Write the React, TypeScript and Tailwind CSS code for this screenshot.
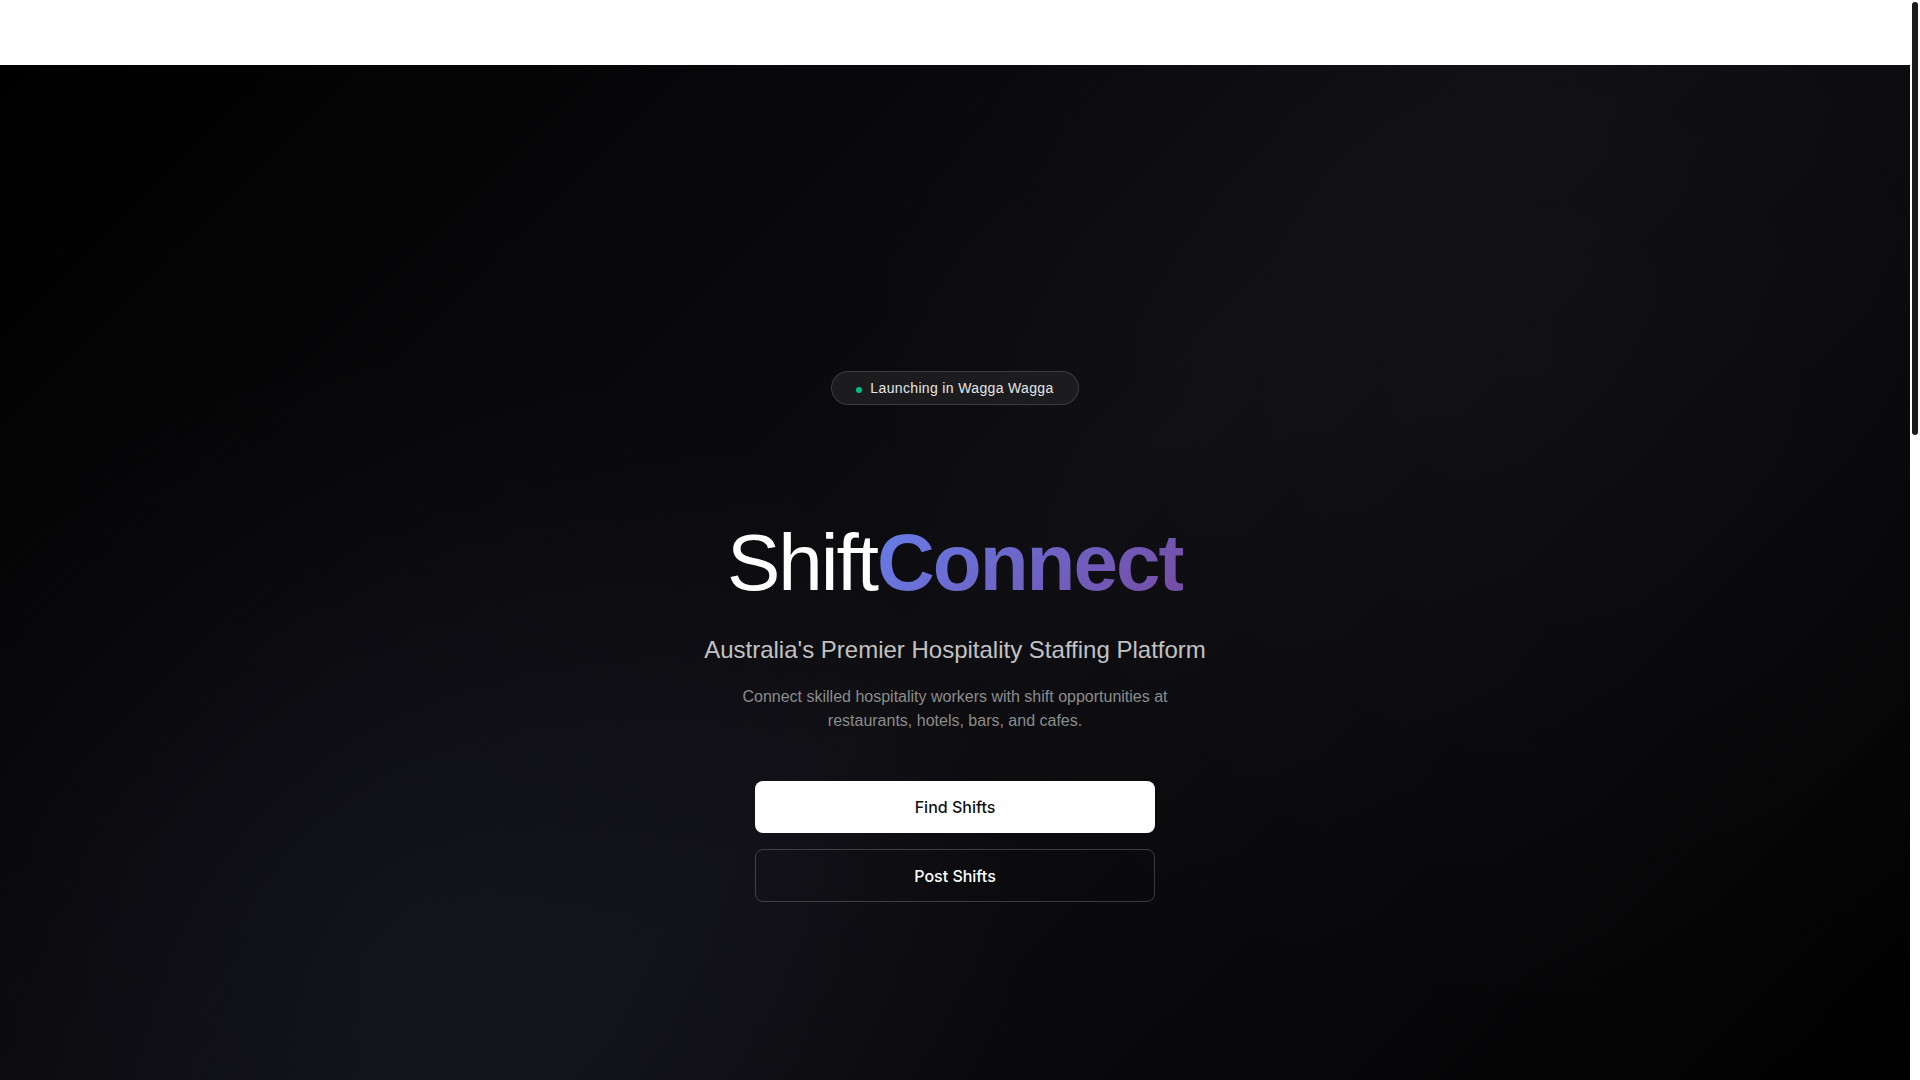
import React from "react";

const heroBg =
  "bg-[radial-gradient(circle_at_22%_78%,rgba(120,119,198,0.07),transparent_35%),radial-gradient(circle_at_80%_25%,rgba(255,255,255,0.025),transparent_40%),linear-gradient(135deg,#000000_0%,#0e0e12_50%,#000000_100%)]";

function LaunchBadge() {
  return (
    <div className="inline-flex items-center rounded-full border border-white/15 bg-[#1c1c1f] px-6 py-1.5 text-sm tracking-wide text-neutral-200 font-['Liberation_Sans',Arial,sans-serif]">
      <span className="mr-2 mt-1 h-1.5 w-1.5 rounded-full bg-emerald-500" />
      Launching in Wagga Wagga
    </div>
  );
}

function Hero() {
  return (
    <section className={`flex h-[1144px] shrink-0 flex-col items-center pt-[306px] ${heroBg}`}>
      <LaunchBadge />

      <h1 className="mt-[118px] text-[80px] leading-none tracking-tight font-['Liberation_Sans',Arial,sans-serif]">
        <span className="font-normal text-white">Shift</span>
        <span className="bg-[linear-gradient(135deg,#667eea_0%,#764ba2_100%)] bg-clip-text font-bold text-transparent">
          Connect
        </span>
      </h1>

      <p className="mt-[31px] text-2xl text-[#c2c2c2] font-['Liberation_Sans',Arial,sans-serif]">
        Australia's Premier Hospitality Staffing Platform
      </p>

      <p className="mt-[19px] max-w-md text-center text-base leading-6 text-[#8c8c8c] font-['Liberation_Sans',Arial,sans-serif]">
        Connect skilled hospitality workers with shift opportunities at restaurants, hotels, bars, and cafes.
      </p>

      <div className="mt-12 flex w-[400px] flex-col gap-4 font-['Inter',sans-serif]">
        <button className="h-[52px] rounded-lg bg-white text-base font-medium text-[#111111]">
          Find Shifts
        </button>
        <button className="h-[53px] rounded-lg border border-white/20 bg-transparent text-base font-medium text-white">
          Post Shifts
        </button>
      </div>
    </section>
  );
}

// page scrollbar rail on the right: white track, slim dark thumb
function ScrollRail() {
  return (
    <div className="w-[10px] shrink-0 bg-white px-[2px] pt-[2px]">
      <div className="h-[433px] rounded-[3px] bg-[#1a1a1a]" />
    </div>
  );
}

export default function App() {
  return (
    <div className="flex h-screen overflow-hidden bg-white">
      <main className="flex min-w-0 flex-1 flex-col">
        <header className="h-[65px] shrink-0 bg-white" />
        <Hero />
      </main>
      <ScrollRail />
    </div>
  );
}
